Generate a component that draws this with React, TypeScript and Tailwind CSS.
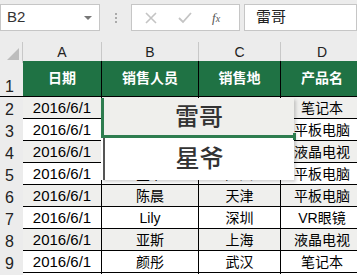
import React from "react";

type Row = { date: string; person: string; city: string; product: string };

const ROWS: Row[] = [
  { date: "2016/6/1", person: "雷哥", city: "北京", product: "笔记本" },
  { date: "2016/6/1", person: "星爷", city: "广州", product: "平板电脑" },
  { date: "2016/6/1", person: "雷哥", city: "北京", product: "液晶电视" },
  { date: "2016/6/1", person: "星爷", city: "广州", product: "平板电脑" },
  { date: "2016/6/1", person: "陈晨", city: "天津", product: "平板电脑" },
  { date: "2016/6/1", person: "Lily", city: "深圳", product: "VR眼镜" },
  { date: "2016/6/1", person: "亚斯", city: "上海", product: "液晶电视" },
  { date: "2016/6/1", person: "颜彤", city: "武汉", product: "笔记本" },
];

const font = { fontFamily: '"Liberation Sans", "Noto Sans CJK SC", sans-serif' };
const cols = "grid grid-cols-[23px_79px_97px_82px_83px]";

export default function App() {
  return (
    <div className="relative h-[275px] w-[357px] overflow-hidden bg-white text-black" style={font}>
      {/* formula bar */}
      <div className="flex h-[42px] items-start bg-[#ececec] pt-[4px]">
        <div className="flex h-[27px] w-[100px] items-center justify-between border border-[#c6c6c6] bg-white pl-[6px] pr-[7px]">
          <span className="text-[15px] text-[#333]">B2</span>
          <span className="h-0 w-0 border-x-[4px] border-t-[4px] border-x-transparent border-t-[#777]" />
        </div>
        <div className="flex h-[27px] w-[31px] flex-col items-center justify-center gap-[2px]">
          <span className="h-[2px] w-[2px] bg-[#aaa]" />
          <span className="h-[2px] w-[2px] bg-[#aaa]" />
          <span className="h-[2px] w-[2px] bg-[#aaa]" />
        </div>
        <div className="flex h-[27px] w-[109px] items-center border border-[#c6c6c6] bg-white">
          <svg width="14" height="14" viewBox="0 0 14 14" className="ml-[12px]">
            <path d="M2 2L12 12M12 2L2 12" stroke="#c4c4c4" strokeWidth="1.6" />
          </svg>
          <svg width="14" height="12" viewBox="0 0 14 12" className="ml-[20px]">
            <path d="M1 6L5 10L13 1" stroke="#c4c4c4" strokeWidth="1.8" fill="none" />
          </svg>
          <span className="ml-[20px] text-[13px] italic text-[#555]" style={{ fontFamily: '"Liberation Serif", serif' }}>
            f<span className="text-[10px]">x</span>
          </span>
        </div>
        <div className="ml-[4px] flex h-[27px] flex-1 items-center border border-[#c6c6c6] bg-white pl-[11px]">
          <span className="text-[15px] text-[#222]">雷哥</span>
        </div>
      </div>

      {/* column headers */}
      <div className={`${cols} h-[19px] bg-[#ececec] text-[14px] text-[#222]`}>
        <div className="relative border-r border-[#c8c8c8]">
          <span className="absolute bottom-[3px] right-[3px] h-0 w-0 border-b-[12px] border-l-[12px] border-b-[#bdbdbd] border-l-transparent" />
        </div>
        {["A", "B", "C", "D"].map((c) => (
          <div key={c} className="flex items-center justify-center border-r border-[#c8c8c8]">
            {c}
          </div>
        ))}
      </div>

      {/* header row */}
      <div className={`${cols} h-[36px] border-b border-black`}>
        <div className="flex items-end bg-[#ececec] pl-[5px] text-[16px] leading-[18px] text-[#222]">1</div>
        {["日期", "销售人员", "销售地", "产品名"].map((h) => (
          <div key={h} className="flex items-center justify-center border-r border-black bg-[#1f7244] text-[14px] font-bold text-white">
            {h}
          </div>
        ))}
      </div>

      {ROWS.map((r, i) => (
        <div key={i} className={`${cols} h-[22px] border-b border-black text-[14px] ${i % 2 === 0 ? "bg-[#efefed]" : "bg-white"}`}>
          <div className="flex items-end border-b border-[#d6d6d6] bg-[#ececec] pl-[5px] text-[16px] leading-[18px] text-[#222]">{i + 2}</div>
          <div className="flex items-center justify-center border-r border-black text-[15px]">{r.date}</div>
          <div className="flex items-center justify-center border-r border-black">{r.person}</div>
          <div className="flex items-center justify-center border-r border-black">{r.city}</div>
          <div className="flex items-center justify-center whitespace-nowrap border-r border-black">{r.product}</div>
        </div>
      ))}
      <div className={`${cols} h-[10px]`}>
        <div className="bg-[#ececec]" />
      </div>

      {/* dropdown list */}
      <div className="absolute left-[101px] top-[98px] flex w-[193px] flex-col bg-white shadow-[2px_2px_3px_rgba(0,0,0,0.18)]">
        <div className="relative flex h-[40px] items-center justify-center border-b-[3px] border-l-[3px] border-[#2e7d4f] bg-[#efefec]">
          <span className="text-[24px] font-medium text-[#333]">雷哥</span>
          <span className="absolute -bottom-[5px] -right-[2px] h-[7px] w-[3px] bg-[#2e7d4f]" />
        </div>
        <div className="ml-[2px] flex h-[42px] items-center justify-center border-l-[2px] border-[#555] bg-white">
          <span className="text-[24px] font-medium text-[#333]">星爷</span>
        </div>
      </div>
    </div>
  );
}
